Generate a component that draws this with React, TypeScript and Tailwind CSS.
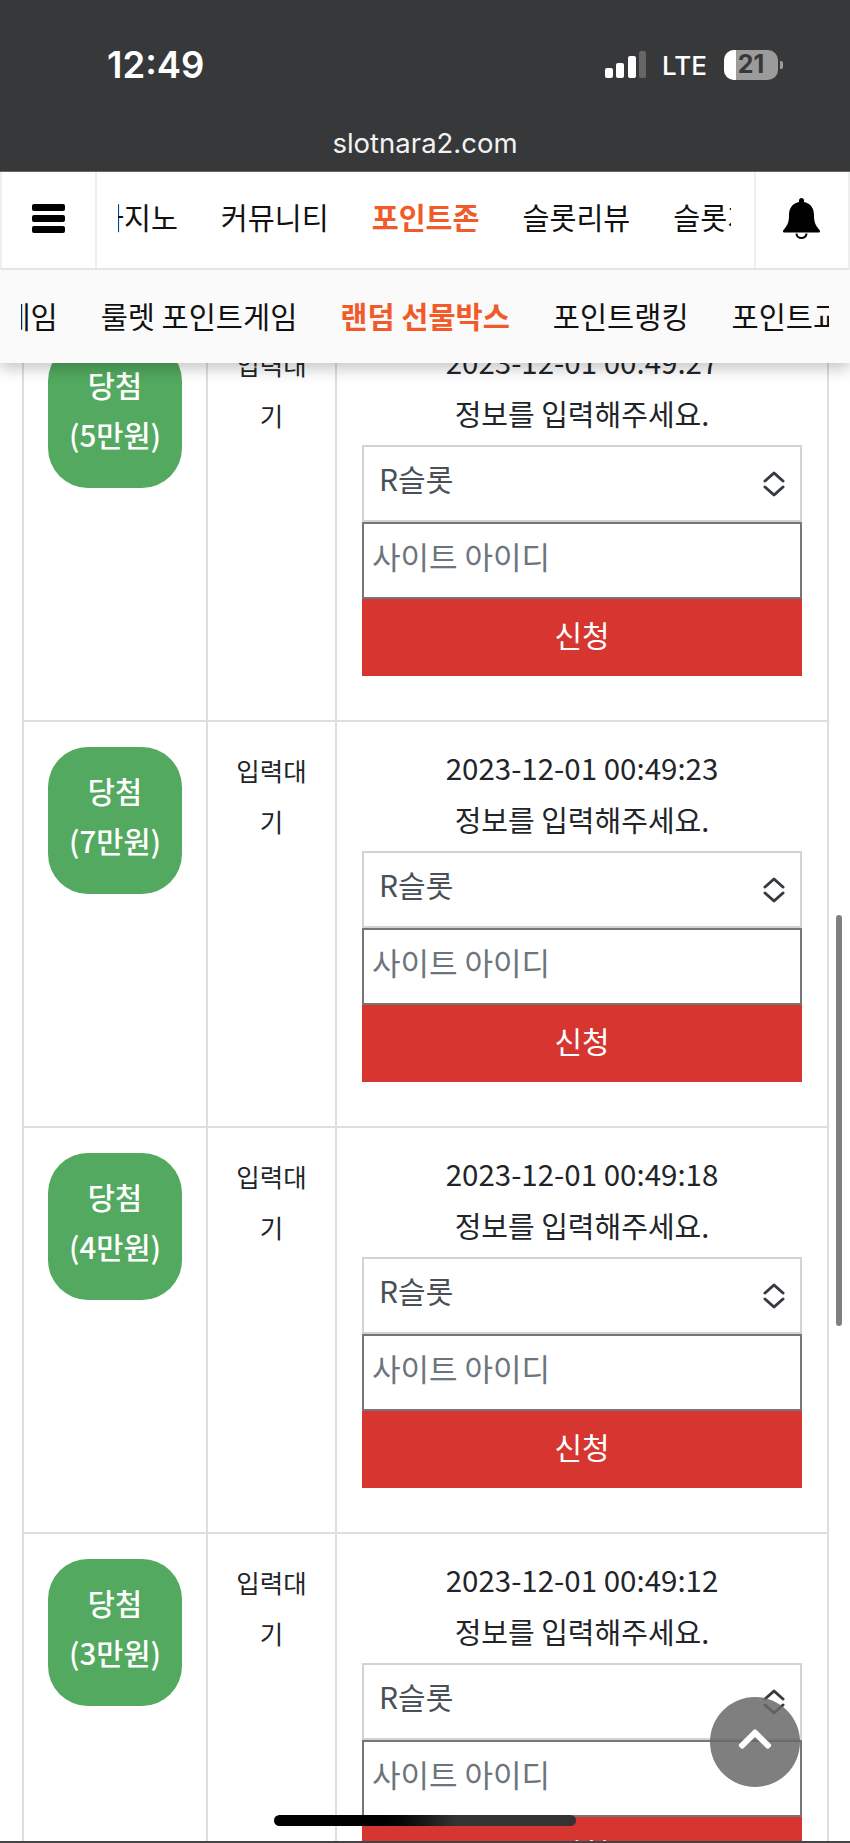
import { FaChevronUp } from 'react-icons/fa';

const rows = [
  { prize: '5만원', time: '2023-12-01 00:49:27' },
  { prize: '7만원', time: '2023-12-01 00:49:23' },
  { prize: '4만원', time: '2023-12-01 00:49:18' },
  { prize: '3만원', time: '2023-12-01 00:49:12' },
];

const mainNav = ['카지노', '커뮤니티', '포인트존', '슬롯리뷰', '슬롯게임'];
const subNav = ['포인트게임', '룰렛 포인트게임', '랜덤 선물박스', '포인트랭킹', '포인트교환'];

function StatusBar() {
  return (
    <div className="h-[172px] bg-[#37383a] border-b border-[#666] text-white relative font-['Inter',sans-serif]">
      <div className="flex items-center justify-between pl-[107px] pr-[67px] pt-[45px]">
        <span className="text-[36.5px] leading-[36px] font-semibold">12:49</span>
        <div className="flex items-center">
          <div className="flex items-end gap-[3.5px] h-[27px] mr-[16px]">
            <span className="w-[8px] h-[10px] bg-white rounded-[2px]"></span>
            <span className="w-[8px] h-[15px] bg-white rounded-[2px]"></span>
            <span className="w-[8px] h-[22px] bg-white rounded-[2px]"></span>
            <span className="w-[7px] h-[27px] bg-[#666] rounded-[2px]"></span>
          </div>
          <span className="text-[26px] leading-[36px] font-medium mr-[17px] mt-[3px]">LTE</span>
          <div className="relative w-[54px] h-[30px] rounded-[10px] bg-[#9b9b9b] overflow-hidden flex items-center justify-center">
            <span className="absolute left-0 top-0 bottom-0 w-[12px] bg-white"></span>
            <span className="text-[25px] font-bold text-[#38383a] leading-none">21</span>
          </div>
          <span className="w-[3px] h-[8px] bg-[#9b9b9b] rounded-r-[2px] ml-[2px]"></span>
        </div>
      </div>
      <div className="absolute bottom-[8px] left-0 right-0 text-center text-[27.5px] leading-[40px] text-[#f2f2f2]">slotnara2.com</div>
    </div>
  );
}

function BellIcon() {
  return (
    <svg width="37" height="41" viewBox="0 0 37 41" fill="black">
      <path d="M18.5 0c1.500 0 2.500 1 2.500 2.500V4C28 5.500 31 10.500 31 17c0 8 2 11 5.500 15 1 1.200.5 2.500-1 2.500H1.500c-1.500 0-2-1.300-1-2.500C4 28 6 25 6 17 6 10.500 9 5.500 16 4V2.500C16 1 17 0 18.500 0z" />
      <path d="M13.500 35.500a5 4.500 0 0 0 10 0" fill="none" stroke="black" strokeWidth="2" />
    </svg>
  );
}

function Header() {
  return (
    <div className="fixed top-0 left-0 right-0 z-10 shadow-[0_6px_14px_rgba(0,0,0,0.22)]">
      <StatusBar />
      <div className="h-[98px] bg-white border-b-2 border-[#e5e5e5] border-l-2 border-l-[#eee] border-r-2 border-r-[#eee] flex">
        <div className="w-[95px] shrink-0 border-r-2 border-[#eee] flex flex-col gap-[4px] pl-[30px] pt-[32px]">
          <span className="w-[33px] h-[7px] rounded-[2px] bg-black"></span>
          <span className="w-[33px] h-[7px] rounded-[2px] bg-black"></span>
          <span className="w-[33px] h-[7px] rounded-[2px] bg-black"></span>
        </div>
        <div className="flex-1 min-w-0 pl-[21px] pr-[23px]">
          <div className="overflow-hidden h-full flex items-center">
            <div className="flex gap-[43px] ml-[-21px] pb-[6px] shrink-0 text-[29.3px] whitespace-nowrap">
              {mainNav.map((item) => (
                <span key={item} className={item === '포인트존' ? 'font-bold text-[#f15a29]' : 'text-[#111]'}>{item}</span>
              ))}
            </div>
          </div>
        </div>
        <div className="w-[94px] shrink-0 border-l-2 border-[#eee] flex justify-center pt-[26px] pr-[1px]">
          <BellIcon />
        </div>
      </div>
      <div className="h-[93px] bg-[#fafafa] px-[21px] flex items-center">
        <div className="overflow-hidden w-full pb-[2px]">
          <div className="flex gap-[43px] ml-[-99px] text-[29.5px] whitespace-nowrap">
            {subNav.map((item) => (
              <span key={item} className={item === '랜덤 선물박스' ? 'font-bold text-[#f15a29]' : 'text-[#111]'}>{item}</span>
            ))}
          </div>
        </div>
      </div>
    </div>
  );
}

function SelectArrows() {
  return (
    <svg width="22" height="26" viewBox="0 0 22 26" fill="none" stroke="#343a40" strokeWidth="3" strokeLinecap="round" strokeLinejoin="round">
      <path d="M2 10 L11 2 L20 10" />
      <path d="M2 16 L11 24 L20 16" />
    </svg>
  );
}

function EntryRow({ prize, time }: { prize: string; time: string }) {
  return (
    <div className="h-[406px] border-t-2 border-[#dedede] grid grid-cols-[182px_129px_1fr]">
      <div className="pt-[25px] pl-[24px]">
        <div className="w-[134px] h-[147px] rounded-[40px] bg-[#52a95f] text-white text-center text-[29.5px] leading-[50px] font-medium pt-[18px]">
          당첨<br />({prize})
        </div>
      </div>
      <div className="border-l-2 border-[#dedede] px-[25px] pt-[22px] text-center text-[25.5px] leading-[51px] text-[#212529]">
        입력대기
      </div>
      <div className="border-l-2 border-[#dedede] px-[25px] pt-[19px] text-center text-[#212529]">
        <div className="text-[29.5px] leading-[52px] whitespace-nowrap">{time}</div>
        <div className="text-[29px] leading-[52px] whitespace-nowrap mb-[6px]">정보를 입력해주세요.</div>
        <div className="h-[77px] border-2 border-[#ced4da] flex items-center justify-between pl-[15px] pr-[15px] text-[30px] text-[#495057]">
          <span className="mb-[10px]">R슬롯</span>
          <SelectArrows />
        </div>
        <div className="h-[77px] border-2 border-[#767676] flex items-center pl-[8px] pb-[8px] text-[31px] text-[#6c757d] bg-white">
          사이트 아이디
        </div>
        <div className="h-[77px] bg-[#d63530] flex items-center justify-center pb-[6px] text-[30px] text-white">신청</div>
      </div>
    </div>
  );
}

export default function App() {
  return (
    <div className="h-[1843px] overflow-hidden bg-white font-['Noto_Sans_CJK_KR',sans-serif]">
      <Header />
      <div className="pt-[314px] pl-[22px] pr-[21px]">
        <div className="border-x-2 border-[#dedede]">
          {rows.map((row) => (
            <EntryRow key={row.time} prize={row.prize} time={row.time} />
          ))}
        </div>
      </div>
      <div className="fixed right-[8px] top-[915px] w-[6px] h-[411px] rounded-full bg-[#808080]"></div>
      <button className="fixed left-[710px] top-[1697px] w-[90px] h-[90px] rounded-full bg-[#696969]/85 flex items-center justify-center text-white pb-[6px]">
        <FaChevronUp size={38} />
      </button>
      <div className="fixed left-[274px] top-[1815px] w-[302px] h-[11px] rounded-[6px] bg-gradient-to-r from-black from-30% to-[#333] to-60%"></div>
      <div className="fixed left-0 right-0 bottom-0 h-[2px] bg-[#444]"></div>
    </div>
  );
}
